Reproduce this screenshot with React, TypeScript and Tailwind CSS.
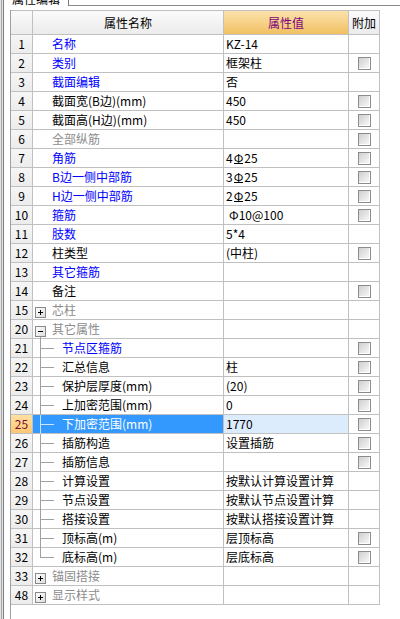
import React from 'react';

type Kind = 'normal' | 'plus' | 'minus' | 'child' | 'last';
type Row = { n: string; name: string; c: 'b' | 'g' | 'k'; v: React.ReactNode; cb: boolean; kind: Kind; sel?: boolean };

const Hrb = () => <span className="border-b border-black leading-[10px] mx-[1px]">Φ</span>;

const rows: Row[] = [
  { n: '1', name: '名称', c: 'b', v: 'KZ-14', cb: false, kind: 'normal' },
  { n: '2', name: '类别', c: 'b', v: '框架柱', cb: true, kind: 'normal' },
  { n: '3', name: '截面编辑', c: 'b', v: '否', cb: false, kind: 'normal' },
  { n: '4', name: '截面宽(B边)(mm)', c: 'k', v: '450', cb: true, kind: 'normal' },
  { n: '5', name: '截面高(H边)(mm)', c: 'k', v: '450', cb: true, kind: 'normal' },
  { n: '6', name: '全部纵筋', c: 'g', v: '', cb: true, kind: 'normal' },
  { n: '7', name: '角筋', c: 'b', v: <>4<Hrb />25</>, cb: true, kind: 'normal' },
  { n: '8', name: 'B边一侧中部筋', c: 'b', v: <>3<Hrb />25</>, cb: true, kind: 'normal' },
  { n: '9', name: 'H边一侧中部筋', c: 'b', v: <>2<Hrb />25</>, cb: true, kind: 'normal' },
  { n: '10', name: '箍筋', c: 'b', v: <span className="pl-[3px]">Φ10@100</span>, cb: true, kind: 'normal' },
  { n: '11', name: '肢数', c: 'b', v: '5*4', cb: false, kind: 'normal' },
  { n: '12', name: '柱类型', c: 'k', v: '(中柱)', cb: true, kind: 'normal' },
  { n: '13', name: '其它箍筋', c: 'b', v: '', cb: false, kind: 'normal' },
  { n: '14', name: '备注', c: 'k', v: '', cb: true, kind: 'normal' },
  { n: '15', name: '芯柱', c: 'g', v: '', cb: false, kind: 'plus' },
  { n: '20', name: '其它属性', c: 'g', v: '', cb: false, kind: 'minus' },
  { n: '21', name: '节点区箍筋', c: 'b', v: '', cb: true, kind: 'child' },
  { n: '22', name: '汇总信息', c: 'k', v: '柱', cb: true, kind: 'child' },
  { n: '23', name: '保护层厚度(mm)', c: 'k', v: '(20)', cb: true, kind: 'child' },
  { n: '24', name: '上加密范围(mm)', c: 'k', v: '0', cb: true, kind: 'child' },
  { n: '25', name: '下加密范围(mm)', c: 'k', v: '1770', cb: true, kind: 'child', sel: true },
  { n: '26', name: '插筋构造', c: 'k', v: '设置插筋', cb: true, kind: 'child' },
  { n: '27', name: '插筋信息', c: 'k', v: '', cb: true, kind: 'child' },
  { n: '28', name: '计算设置', c: 'k', v: '按默认计算设置计算', cb: false, kind: 'child' },
  { n: '29', name: '节点设置', c: 'k', v: '按默认节点设置计算', cb: false, kind: 'child' },
  { n: '30', name: '搭接设置', c: 'k', v: '按默认搭接设置计算', cb: false, kind: 'child' },
  { n: '31', name: '顶标高(m)', c: 'k', v: '层顶标高', cb: true, kind: 'child' },
  { n: '32', name: '底标高(m)', c: 'k', v: '层底标高', cb: true, kind: 'last' },
  { n: '33', name: '锚固搭接', c: 'g', v: '', cb: false, kind: 'plus' },
  { n: '48', name: '显示样式', c: 'g', v: '', cb: false, kind: 'plus' },
];

const colorCls = { b: 'text-[#0000ff]', g: 'text-[#8c8c8c]', k: 'text-black' };

function TreeBox({ minus }: { minus: boolean }) {
  return (
    <svg width="11" height="11" viewBox="0 0 11 11" className="block shrink-0">
      <defs>
        <linearGradient id="tb" x1="0" y1="0" x2="1" y2="1">
          <stop offset="0" stopColor="#ffffff" />
          <stop offset="1" stopColor="#dcdcdc" />
        </linearGradient>
      </defs>
      <rect x="0.5" y="0.5" width="10" height="10" fill="url(#tb)" stroke="#8a8a8a" />
      <rect x="3" y="5" width="5" height="1" fill="#000" />
      {!minus && <rect x="5" y="3" width="1" height="5" fill="#000" />}
    </svg>
  );
}

function CheckBox() {
  return (
    <div className="w-[13px] h-[13px] border border-[#8c8c8c] bg-gradient-to-br from-[#cfcfcf] to-[#fbfbfb] shadow-[inset_-1px_-1px_0_#ffffff]" />
  );
}

function NameCell({ r }: { r: Row }) {
  const sel = !!r.sel;
  const line = sel ? 'border-[#cfe4ff]' : 'border-[#a0a0a0]';
  const txt = sel ? 'text-white' : colorCls[r.c];
  if (r.kind === 'normal') {
    return (
      <div className={`w-[191px] border-r border-[#c0c0c0] pl-[19px] flex items-center whitespace-nowrap ${txt}`}>{r.name}</div>
    );
  }
  if (r.kind === 'plus' || r.kind === 'minus') {
    return (
      <div className={`w-[191px] border-r border-[#c0c0c0] pl-[2px] flex whitespace-nowrap ${txt}`}>
        <div className="w-[11px] flex flex-col items-center">
          <div className="h-[6px]" />
          <TreeBox minus={r.kind === 'minus'} />
          {r.kind === 'minus' && <div className="flex-1 w-px bg-[#a0a0a0] -mb-px" />}
        </div>
        <span className="ml-[6px] self-center">{r.name}</span>
      </div>
    );
  }
  return (
    <div className={`w-[191px] border-r border-[#c0c0c0] pl-[7px] flex whitespace-nowrap ${sel ? 'bg-[#3399ff]' : ''} ${txt}`}>
      <div className="w-[14px] flex flex-col">
        <div className={`h-[10px] border-l border-b ${line}`} />
        {r.kind === 'child' && <div className={`flex-1 border-l ${line} -mb-px`} />}
      </div>
      <span className="ml-[8px] self-center">{r.name}</span>
    </div>
  );
}

export default function App() {
  return (
    <div className="w-[400px] h-[619px] overflow-hidden bg-white flex font-['Noto_Sans_CJK_SC',sans-serif] text-[12px] text-black">
      <div className="w-px bg-[#e2e2e2]" />
      <div className="w-px bg-[#a8a8a8]" />
      <div className="w-px bg-[#e2e2e2]" />
      <div className="w-px bg-[#7f7f7f]" />
      <div className="flex-1 flex flex-col">
        <div className="h-[6px] flex overflow-hidden shrink-0">
          <div className="w-[65px] border-r border-[#7a7a7a] flex items-end pl-[8px] overflow-hidden">
            <span className="leading-[12px] mb-[1px] whitespace-nowrap">属性编辑</span>
          </div>
          <div className="flex-1 border-b border-[#8a8a8a]" />
        </div>
        <div className="h-[4px] shrink-0" />
        <div className="flex-1 flex">
          <div className="w-[6px]" />
          <div className="flex-1 border-l border-[#a0a0a0]">
            <div className="w-[369px] border-t border-[#c0c0c0] leading-[18px]">
              <div className="flex h-[24px] border-b border-[#c0c0c0]">
                <div className="w-[22px] border-r border-[#c0c0c0] bg-gradient-to-b from-[#fbfbfb] to-[#ebebeb]" />
                <div className="w-[191px] border-r border-[#c0c0c0] bg-gradient-to-b from-[#fbfbfb] to-[#ebebeb] flex items-center justify-center">属性名称</div>
                <div className="w-[125px] border-r border-[#c0c0c0] bg-gradient-to-b from-[#fbe2ab] to-[#f1c061] flex items-center justify-center text-[#800080]">属性值</div>
                <div className="w-[31px] border-r border-[#c0c0c0] bg-gradient-to-b from-[#fbfbfb] to-[#ebebeb] flex items-center justify-center">附加</div>
              </div>
              {rows.map((r) => (
                <div key={r.n} className="flex h-[19px] border-b border-[#c0c0c0]">
                  <div
                    className={`w-[22px] border-r border-[#c0c0c0] flex items-center justify-center ${
                      r.sel ? 'bg-gradient-to-b from-[#ffe0a0] to-[#fcc873] text-[#7a1030]' : 'bg-gradient-to-b from-[#f6f6f6] to-[#ececec]'
                    }`}
                  >
                    {r.n}
                  </div>
                  <NameCell r={r} />
                  <div className={`w-[125px] border-r border-[#c0c0c0] pl-[2px] flex items-center whitespace-nowrap ${r.sel ? 'bg-[#ddecfd]' : ''}`}>
                    {r.v}
                  </div>
                  <div className="w-[31px] border-r border-[#c0c0c0] flex items-center justify-center">{r.cb && <CheckBox />}</div>
                </div>
              ))}
            </div>
          </div>
        </div>
      </div>
    </div>
  );
}
